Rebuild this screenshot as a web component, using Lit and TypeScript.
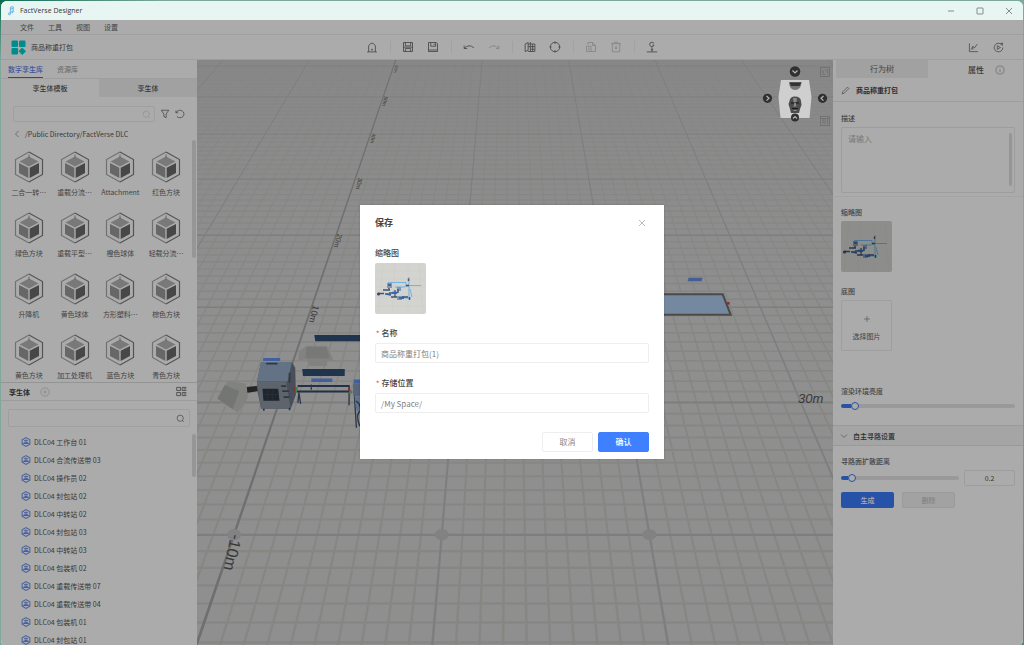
import { LitElement, html, css, svg } from "lit";
import { customElement, property } from "lit/decorators.js";

const ICONS: Record<string, unknown> = {
  home: svg`<path d="M3.500 14.500V6.500L6 3.500Q8 2 10 3.500L12.500 6.500V14.500M1.500 14.500H14.500M8 10.500V12.500M7 11.500H9"/>`,
  saveAs: svg`<path d="M2 2H14V14H2ZM4.500 2V6.500H11.500V2M4.500 14V10H11.500V14M2 8.200H14"/>`,
  save: svg`<path d="M2 2H12.500L14 3.500V14H2ZM5 2V7H11.500V2M9.500 3.500V5.500M2 12H14"/>`,
  undo: svg`<path d="M1.500 6V10H5.500M1.800 9.600Q8 3.500 14.500 9"/>`,
  redo: svg`<path d="M14.500 6V10H10.500M14.200 9.600Q8 3.500 1.500 9"/>`,
  map: svg`<path d="M1.500 4L5.500 2V12.500L1.500 14ZM5.500 4H14.500V14H5.500M8.500 1.500V14.500M11.500 4V14M5.500 7.500H14.500M8.500 11H14.500"/>`,
  target: svg`<circle cx="8" cy="8" r="6.300"/><path d="M8 .8V4M8 12V15.200M.8 8H3.500M12.500 8H15.200"/>`,
  copy: svg`<path d="M4 5V2H10L14 6V14H8M10 2V6H14M2 7H8V14H2ZM4 9.500H6M4 11.500H6"/>`,
  trash: svg`<path d="M1.500 3.500H14.500M5.500 3.500V1.500H10.500V3.500M3 3.500V14.500H13V3.500M6.500 7L9.500 11M9.500 7L6.500 11"/>`,
  origin: svg`<path d="M10.800 3Q8 .3 5.500 2.500Q3.700 5.500 6.500 7.500Q9.500 8.500 10.800 5.500H8.500M8 8.500V14.500M1 14.500H15M6.500 11.500H9.500"/>`,
  chart: svg`<path d="M2 2V14H14.500M4.500 11L7 6.500L9.500 8.500L13.500 3M7 6.500V11"/>`,
  play: svg`<path d="M13.500 5A6.300 6.300 0 1 0 14.300 8M10.500 2.500L14 1.500L13.500 5M6.300 5.300L10.800 8L6.300 10.700Z"/>`,
  filter: svg`<path d="M2 2H14L9.800 8V14L6.200 12V8Z"/>`,
  refresh: svg`<path d="M1.500 2.500V6H5M2 5.500A6.500 6 0 1 1 3 12"/>`,
  search: svg`<circle cx="7.500" cy="7.500" r="5.500"/><path d="M11.500 11.500L14 14"/>`,
  back: svg`<path d="M11 2L5 8L11 14"/>`,
  down: svg`<path d="M2 5L8 11L14 5"/>`,
  pen: svg`<path d="M2 14L3 10.500L11.500 2L14 4.500L5.500 13Z"/>`,
  info: svg`<circle cx="8" cy="8" r="6.500"/><path d="M8 7V11.500M8 4.500V5.500"/>`,
  add: svg`<circle cx="8" cy="8" r="6.500"/><path d="M8 5V11M5 8H11"/>`,
  plus: svg`<path d="M8 2V14M2 8H14"/>`,
  close: svg`<path d="M2 2L14 14M14 2L2 14"/>`,
  min: svg`<path d="M2 8H14"/>`,
  max: svg`<rect x="2" y="2" width="12" height="12" rx="1"/>`,
  layout: svg`<path d="M1 2H6.500V6.500H1ZM1 9.500H6.500V14H1ZM9 2V6.500H15M9 2H15M9 9.500V14H15M9 9.500H15M11 4.200H15M11 11.700H15"/>`,
  note: svg`<path d="M7 2V12M7 2L11.500 1V9M7 5L11.500 4"/><circle cx="5.500" cy="12.500" r="1.600"/><circle cx="10.200" cy="9.500" r="1.300"/>`,
  cube: svg`<path d="M8 1L14.200 4.500V11.500L8 15L1.800 11.500V4.500Z"/><path d="M5 6.500L8 5L11 6.500M4.500 10.500H11.500L8 8Z"/>`,
};

const icon = (name: string, size = 12) =>
  html`<svg class="icon" width=${size} height=${size} viewBox="0 0 16 16" aria-hidden="true">${ICONS[name]}</svg>`;

const preview = () => html`<svg class="preview" viewBox="0 0 51 51" role="img" aria-label="缩略图">
  <rect width="51" height="51" fill="#d3d3d0"/>
  <path d="M0 8H51M0 16H51M0 24H51M0 33H51M0 43H51M8 0L3 51M20 0L17 51M33 0V51M44 0L48 51" stroke="#cbcbc8" stroke-width=".5"/>
  <path d="M13 19.500H31V23M34 14V36M20 24H29L34 22.500H46M35 26L37 34M22 35H36" stroke="#6aaee0" stroke-width=".9" fill="none"/>
  <path d="M3 30.500H9M8 27H15M14 30H22M16 34H33M20 27V34M11 31L16 32" stroke="#42536f" stroke-width="1.300" fill="none"/>
  <path d="M12 20H17V25H12ZM22 24H26V28H22ZM22 33H27V37H22Z" fill="#7b98bd"/>
  <path d="M13 22H16M14 25V27M23 26V30M24 35H29M34.500 34V37M33.500 15.500V18M31 22.500H34" stroke="#46536c" stroke-width="1.400"/>
  <path d="M17 29.500H23M10 31H14M28 33V36" stroke="#2f69bd" stroke-width="1.500"/>
  <circle cx="3.500" cy="31" r="1.500" fill="#3d4657"/>
</svg>`;

const shared = css`
  * { box-sizing: border-box; }
  .icon { display: block; fill: none; stroke: currentColor; stroke-width: 1.1; flex: none; }
  button, input, textarea { font: inherit; color: inherit; margin: 0; outline: none; }
  button { border: 0; padding: 0; background: none; }
  .preview { display: block; width: 51px; height: 51px; border-radius: 2px; }
`;

/* Floor grid: rows recede toward the horizon, columns meet at one vanishing point. */
const VX = 511, VY = -277, NEAR = 533;
const rowY = (n: number) => VY + 41650 / (51.4 + n);
const column = (k: number) => {
  const x = 442 + k * 20.7;
  const at = (y: number) => VX + ((x - VX) * (y - VY)) / (NEAR - VY);
  const major = k % 10 === 0;
  const w = k === -10 ? 2.6 : 2.2;
  const half = (y: number) => (w / 2) * ((y - VY) / (NEAR - VY));
  const fill = k === -10 ? "#a6a6a6" : major ? "#babcbe" : "#c8c8c4";
  return svg`<polygon fill=${fill} points="${at(40) - half(40)},40 ${at(40) + half(40)},40 ${at(660) + half(660)},660 ${at(660) - half(660)},660"/>`;
};
const row = (n: number) => {
  const y = rowY(n);
  const major = n % 10 === 0;
  return svg`<line x1="0" x2="1024" y1=${y} y2=${y} stroke=${major ? "#bcbcbc" : "#c8c8c4"} stroke-width=${2.2 * ((y - VY) / (NEAR - VY))}/>`;
};
const range = (a: number, b: number) => Array.from({ length: b - a + 1 }, (_, i) => a + i);

@customElement("scene-view")
export class SceneView extends LitElement {
  static styles = [shared, css`
    :host { display: block; position: relative; overflow: hidden; min-width: 0; background: #d5d5d5; }
    .floor { position: absolute; inset: 0; width: 100%; height: 100%; display: block; }
    .gizmo { position: absolute; top: 4px; right: 0; z-index: 6; display: block; }
    .mark { font-family: "Liberation Sans", Arial, sans-serif; fill: #555; }
  `];
  render() {
    return html`
      <svg class="floor" viewBox="197 60 636 584" preserveAspectRatio="xMidYMid slice">
        <defs><linearGradient id="far" x2="0" y2="1"><stop offset="0" stop-color="#c6c6c6" stop-opacity=".75"/><stop offset="1" stop-color="#cdcdcd" stop-opacity="0"/></linearGradient></defs>
        ${range(-45, 52).filter((k) => k % 10).map(column)}
        ${range(-7, 75).filter((n) => n % 10).map(row)}
        <rect x="197" y="55" width="636" height="260" fill="url(#far)"/>
        ${range(0, 7).map((n) => row(n * 10))}
        ${[-40, -30, -20, -10, 0, 10, 20, 30, 40, 50].map(column)}
        ${[235, 442, 649].map((x) => svg`<ellipse cx=${x} cy="533" rx="7" ry="5.500" fill="#c2c2c2"/>`)}
        <text class="mark" font-size="16" transform="translate(232 532) rotate(102)">-10m</text>
        <text class="mark" font-size="13" x="797" y="402" font-style="italic">30m</text>
        <text class="mark" font-size="9" transform="translate(314 304) rotate(105)">10m</text>
        <text class="mark" font-size="7" transform="translate(338 233) rotate(105)">20m</text>
        <text class="mark" font-size="6" transform="translate(359 177) rotate(104)">30m</text>
        <text class="mark" font-size="5" transform="translate(373 133) rotate(104)">40m</text>
        <text class="mark" font-size="5" transform="translate(385 96) rotate(104)">50m</text>
        <text class="mark" font-size="4" transform="translate(396 65) rotate(104)">60m</text>
        <g transform="translate(197 250) scale(.3333)">
          <path d="M354 252H500V271H357ZM318 354H445V375H320Z" fill="#304f73"/>
          <path d="M308 300L332 284H392L412 330L395 328L390 345H340L330 325L306 330Z" fill="#c2c3c0"/>
          <path d="M330 288H390L400 322H328Z" fill="#b3b5b1"/>
          <path d="M95 390L150 397L155 440L125 485L66 443Z" fill="#c2c4c1"/>
          <path d="M86 402L130 420L110 474L64 442Z" fill="#aeb1ad"/>
          <path d="M201 321H252V330H201ZM345 382H408V393H345ZM472 385H500V397H472Z" fill="#6290eb"/>
          <path d="M152 408L186 404V420L154 425Z" fill="#35363a"/>
          <path d="M195 333H287L297 350L299 430L284 473H195L182 410L184 385Z" fill="#6d7786"/>
          <path d="M195 333H287L274 391H182Z" fill="#95abc8"/>
          <path d="M182 392H270L283 473H195Z" fill="#8d96a2"/>
          <path d="M199 413H246L250 449H202Z" fill="#303640"/>
          <path d="M210 338H244M280 365V395M255 405H270M258 420H278M262 438H280M203 473V479M280 470V477" stroke="#4a5361" stroke-width="5" fill="none"/>
          <path d="M215 413V449M230 413V449M202 430H248" stroke="#454e5c" stroke-width="2"/>
          <path d="M304 402H460V408H304ZM301 418H464V424H301Z" fill="#354969"/>
          <path d="M308 424L305 455M308 424L313 458M458 424V462M345 400V416M474 435L480 530" stroke="#43536c" stroke-width="4"/>
          <path d="M292 407H298V419H292ZM455 407H461V419H455Z" fill="#d03951"/>
          <path d="M298 408H305V420H298ZM458 420H468V427H458Z" fill="#5fc95f"/>
          <path d="M470 397H500V435H470Z" fill="#8299bb"/><path d="M474 435H500V495L480 478Z" fill="#8cacd8"/>
          <path d="M478 450Q492 455 492 478Q476 490 490 525" fill="none" stroke="#3b4f69" stroke-width="4"/>
        </g>
        <path d="M640 293.500H722L730 314H640Z" fill="#aecbed" stroke="#736d6b" stroke-width="2"/>
        <path d="M688 277H702L701 280.500H687Z" fill="#688cdc"/>
        <path d="M726 302.500H729" stroke="#cc4659" stroke-width="2.500"/>
      </svg>
      <svg class="gizmo" width="71" height="64" viewBox="762 64 71 64" aria-hidden="true">
        <path d="M781 80H809L811.500 97L809.500 118H780.500L778.500 97Z" fill="#cfcfcf"/>
        <g fill="#303030"><circle cx="795" cy="71.500" r="5.300"/><circle cx="767.500" cy="98.300" r="4.600"/><circle cx="822.500" cy="98.300" r="4.600"/></g>
        <path d="M792.500 70.500L795 73L797.500 70.500M766.500 96L769 98.300L766.500 100.600M823.500 96L821 98.300L823.500 100.600" fill="none" stroke="#b5b5b5" stroke-width="1.200"/>
        <path d="M789 82H801.500Q801 90 795 90Q789.500 90 789 82Z" fill="#777"/><path d="M789.500 82.500H801.500L799.500 86H791Z" fill="#333"/>
        <path d="M789.500 101Q790 96.500 795 96.500Q800.500 96.500 801 101L801.500 105L800 109L799 113H791L790 109L788.500 104Z" fill="#4c4c4c"/>
        <path d="M793 98H797L796.500 102H793.500ZM794.200 103H795.800L796.500 106.500H793.500ZM793.500 110H796.500V111H793.500Z" fill="#8a8a8a"/>
        <path d="M791 103H794M796 103H799M792 108.500H798" stroke="#171717" stroke-width="1.200"/>
        <circle cx="795" cy="117.500" r="4" fill="#303030"/><path d="M793 118.500L795 116.500L797 118.500" fill="none" stroke="#bbb" stroke-width="1.100"/>
        <g fill="none" stroke="#707070" stroke-width=".9"><rect x="820.500" y="67.500" width="9" height="9"/><path d="M823 70V74.500H825M825 70H827.500V74.500"/><rect x="820.500" y="116.500" width="9" height="9"/><path d="M823 119V124M825 119V124M827.500 119V124M820.500 118.500H829.500"/></g>
      </svg>`;
  }
}

@customElement("twin-tile")
export class TwinTile extends LitElement {
  @property() label = "";
  static styles = [shared, css`
    :host { display: block; min-width: 0; }
    .tile { width: 100%; display: flex; flex-direction: column; align-items: center; gap: 2px; }
    .label { line-height: 12px; white-space: nowrap; color: #666; }
  `];
  render() {
    return html`<button class="tile">
      <svg width="30" height="34" viewBox="0 0 30 34" aria-hidden="true">
        <path d="M15 2L1.500 9.500V24.500L15 32" fill="none" stroke="#a9a9a9" stroke-width="1.200"/>
        <path d="M15 2L28.500 9.500V24.500L15 32" fill="none" stroke="#7c7c7c" stroke-width="1.200"/>
        <path d="M15 6.500L24.500 11.500L15 16.500L5.500 11.500Z" fill="#b5b5b5"/>
        <path d="M5 13L14.300 17.800V28L5 23Z" fill="#9a9a9a"/>
        <path d="M25 13L15.700 17.800V28L25 23Z" fill="#6a6a6a"/>
        <path d="M15 4.500V8" stroke="#999" stroke-width="1"/>
      </svg>
      <span class="label">${this.label}</span>
    </button>`;
  }
}

const TILES = ["二合一转⋯", "重载分流⋯", "Attachment", "红色方块", "绿色方块", "重载平型⋯", "橙色球体", "轻载分流⋯",
  "升降机", "黄色球体", "方形塑料⋯", "棕色方块", "黄色方块", "加工处理机", "蓝色方块", "青色方块"];
const TWINS = ["工作台 01", "合流传送带 03", "操作员 02", "封包站 02", "中转站 02", "封包站 03", "中转站 03",
  "包装机 02", "重载传送带 07", "重载传送带 04", "包装机 01", "封包站 01"];
const TOOLS = [["home"], ["saveAs", "save"], ["undo", "redo"], ["map", "target"], ["copy", "trash"], ["origin"]];
const INACTIVE = ["redo", "copy", "trash"];

@customElement("app-root")
export class AppRoot extends LitElement {
  static styles = [shared, css`
    :host { display: block; height: 100vh; padding: 1px; background: linear-gradient(160deg, #0b6b50, #7da89b 6%, #7da89b 70%, #4f8a68);
      font: 7px/12px "Noto Sans CJK SC", "Noto Sans", sans-serif; color: #555; }
    .window { height: 100%; display: flex; flex-direction: column; border-radius: 6px; overflow: hidden; background: #fff; }
    .titlebar { height: 19px; flex: none; display: flex; align-items: center; gap: 4px; padding: 0 2px 0 5px; background: #e8f6f3; color: #333;
      font-family: "Open Sans", "Noto Sans", sans-serif; }
    .titlebar .logo { color: #3598e0; display: flex; }
    .spacer { flex: 1; }
    .wincontrol { width: 25px; display: flex; justify-content: center; color: #333; }
    .wincontrols { display: flex; gap: 4px; }
    .content { flex: 1; min-height: 0; position: relative; display: flex; flex-direction: column; }
    .menubar { height: 15px; flex: none; display: flex; align-items: center; gap: 14px; padding: 0 19px; border-bottom: 1px solid #eee; color: #666; }
    .toolbar { height: 25px; flex: none; display: grid; grid-template-columns: 1fr auto 1fr; align-items: center; border-bottom: 1px solid #ececec; }
    .project { display: flex; align-items: center; gap: 5px; padding-left: 10px; color: #555; }
    .tools { display: flex; align-items: center; }
    .tool { width: 25px; display: flex; justify-content: center; color: #666; }
    .faded { color: #c4c4c4; }
    .group { display: flex; }
    .group + .group { margin-left: 5px; padding-left: 5px; border-left: 1px solid #f0f0f0; }
    .run { justify-self: end; display: flex; padding-right: 12px; }
    .main { flex: 1; min-height: 0; display: grid; grid-template-columns: 196px minmax(0, 1fr) 190px; }
    .side { min-width: 0; min-height: 0; display: flex; flex-direction: column; overflow: hidden; background: #fff; }
    .library { height: 323px; flex: none; display: flex; flex-direction: column; position: relative; border-bottom: 1px solid #ddd; overflow: hidden; }
    .tabs { height: 19px; flex: none; display: flex; gap: 14px; padding: 0 7px; border-bottom: 1px solid #ececec; }
    .tab { height: 18px; color: #999; }
    .tab.on { color: #5a80e6; font-weight: 500; border-bottom: 1px solid #3e70e6; }
    .halves { height: 18px; flex: none; display: grid; grid-template-columns: 1fr 1fr; }
    .half.off { background: #f1f1f1; }
    .half { font-weight: 500; }
    .find { display: flex; align-items: center; gap: 5px; padding: 9px 12px 0; }
    .searchbox { flex: 1; min-width: 0; height: 16px; display: flex; align-items: center; border: 1px solid #ededed; border-radius: 2px; padding: 0 3px; }
    .searchbox input { flex: 1; min-width: 0; border: 0; padding: 0; background: none; height: 12px; }
    .tint { color: #d2d2d2; display: flex; }
    .path { display: flex; align-items: center; gap: 4px; padding: 5px 12px 0; line-height: 14px; }
    .tiles { display: grid; grid-template-columns: repeat(4, 1fr); row-gap: 13px; padding: 9px 8px 0 5px; }
    .bar { position: absolute; width: 4px; border-radius: 2px; background: #e0e0e0; }
    .bar-tiles { right: 1px; top: 80px; height: 118px; }
    .bar-twins { right: 1px; top: 7px; height: 43px; }
    .bar-text { width: 3px; right: 3px; top: 6px; height: 53px; }
    .subhead { height: 18px; flex: none; display: flex; align-items: center; gap: 10px; padding: 0 10px 0 8px; border-bottom: 1px solid #e9e9e9; }
    .subhead h2, .name h2, .section h2 { margin: 0; font-size: 7px; font-weight: 700; color: #444; }
    .filter { padding: 8px 7px 0; display: flex; }
    .filter .searchbox { height: 18px; padding: 0 4px; }
    .listwrap { position: relative; flex: 1; min-height: 0; overflow: hidden; }
    .list { list-style: none; margin: 0; padding: 6px 0 0 20px; }
    .list li { height: 18px; display: flex; align-items: center; gap: 3px; color: #555; }
    .list .icon { color: #6a90ee; stroke-width: 1.7; }
    .props-tabs { height: 19px; flex: none; display: flex; padding-left: 3px; font-size: 8px; }
    .props-tabs .behavior { flex: 0 0 92px; background: #f1f1f1; height: 18px; color: #666; }
    .props-tabs .current { flex: 1; display: flex; align-items: center; justify-content: flex-end; gap: 11px; padding-right: 18px; font-weight: 500; }
    .current .icon { color: #999; }
    .name { height: 23px; flex: none; display: flex; align-items: center; gap: 6px; padding: 0 8px; border-bottom: 1px solid #eaeaea; }
    .block { padding: 0 8px; display: flex; flex-direction: column; align-items: flex-start; }
    .block label, .block .caption { line-height: 12px; font-weight: 500; color: #666; }
    .describe { padding-top: 10px; gap: 3px; height: 95px; border-bottom: 1px solid #f5f5f5; }
    .area { position: relative; width: 100%; }
    .area textarea { display: block; width: 100%; height: 66px; resize: none; overflow: hidden; border: 1px solid #ebebeb; border-radius: 2px; padding: 4px 6px; font-size: 8px; line-height: 14px; background: none; }
    textarea::placeholder { color: #b4b4b4; }
    .thumbs { padding-top: 9px; gap: 3px; }
    .backdrop { padding-top: 13px; gap: 3px; }
    .pick { width: 51px; height: 51px; border: 1px solid #ececec; border-radius: 2px; display: flex; flex-direction: column; align-items: center; justify-content: center; gap: 7px; padding-top: 5px; color: #666; }
    .light { padding-top: 34px; padding-bottom: 14px; gap: 4px; }
    .range { -webkit-appearance: none; appearance: none; width: 100%; min-width: 0; height: 10px; padding: 0; background: none; display: block; }
    .range::-webkit-slider-runnable-track { height: 4px; border-radius: 2px; background: linear-gradient(to right, #3a7bfa var(--fill), #e4e4e4 var(--fill)); }
    .range::-webkit-slider-thumb { -webkit-appearance: none; width: 8px; height: 8px; margin-top: -2px; border: 1px solid #3a7bfa; border-radius: 50%; background: #fff; }
    .section { height: 21px; flex: none; display: flex; align-items: center; gap: 5px; padding: 0 7px; background: #f6f6f6; border: solid #e6e6e6; border-width: 1px 0; }
    .section h2 { font-weight: 500; }
    .route { padding-top: 9px; gap: 3px; }
    .pair { width: 100%; display: grid; grid-template-columns: 1fr 51px; gap: 5px; align-items: center; }
    .number { width: 100%; height: 16px; border: 1px solid #eaeaea; border-radius: 2px; text-align: center; padding: 0; background: none; }
    .actions { display: flex; gap: 8px; padding-top: 3px; }
    .small { width: 53px; height: 16px; border-radius: 2px; background: #3a7bfa; color: #fff; font-weight: 500; }
    .small[disabled] { background: #f2f2f2; border: 1px solid #e8e8e8; color: #c4c4c4; }
    .overlay { position: absolute; inset: 0; z-index: 5; background: rgba(0, 0, 0, .33); }
    .center { position: absolute; inset: 0; z-index: 7; display: flex; align-items: center; justify-content: center; padding-bottom: 2px; }
    .dialog { width: 304px; background: #fff; padding: 11px 15px 7px; border: 0; display: flex; flex-direction: column; color: #444; font-size: 8px; line-height: 14px; box-shadow: 0 0 2px rgba(0, 0, 0, .2); }
    .head { display: flex; justify-content: space-between; align-items: center; padding-right: 3px; }
    .head h1 { margin: 0; font-size: 9px; line-height: 14px; font-weight: 700; }
    .head button { color: #888; }
    .thumb { display: flex; flex-direction: column; gap: 3px; padding-top: 16px; font-weight: 500; }
    .field { display: flex; flex-direction: column; gap: 3px; padding-top: 13px; }
    .thumb + .field { padding-top: 12px; }
    .field label { font-weight: 500; }
    .star { color: #f04848; padding-left: 1px; padding-right: 2px; font-size: 7px; }
    .field input { height: 20px; border: 1px solid #eee; border-radius: 2px; padding: 0 5px; color: #808080; background: #fff; }
    .buttons { display: flex; justify-content: flex-end; gap: 5px; padding-top: 19px; }
    .btn { width: 51px; height: 20px; border-radius: 2px; border: 1px solid #eee; color: #888; }
    .primary { background: #3e80ff; border-color: #3e80ff; color: #fff; font-weight: 500; }
  `];

  private slider(id: string, value: number) {
    return html`<input class="range" id=${id} type="range" min="0" max="100" .value=${String(value)} style="--fill: ${value}%">`;
  }

  private leftPanel() {
    return html`<aside class="side">
      <section class="library">
        <div class="tabs"><button class="tab on">数字孪生库</button><button class="tab">资源库</button></div>
        <div class="halves"><button class="half">孪生体模板</button><button class="half off">孪生体</button></div>
        <div class="find">
          <div class="searchbox"><input type="text" aria-label="搜索模板"><span class="tint">${icon("search", 9)}</span></div>
          <button aria-label="筛选">${icon("filter", 10)}</button>
          <button aria-label="刷新">${icon("refresh", 10)}</button>
        </div>
        <div class="path"><button aria-label="返回">${icon("back", 8)}</button><span>/Public Directory/FactVerse DLC</span></div>
        <div class="tiles">${TILES.map((t) => html`<twin-tile .label=${t}></twin-tile>`)}</div>
        <div class="bar bar-tiles"></div>
      </section>
      <div class="subhead"><h2>孪生体</h2><button class="faded" aria-label="添加">${icon("add", 10)}</button><span class="spacer"></span><button aria-label="布局">${icon("layout", 11)}</button></div>
      <div class="filter"><div class="searchbox"><input type="text" aria-label="搜索孪生体">${icon("search", 9)}</div></div>
      <div class="listwrap">
        <ul class="list">${TWINS.map((t) => html`<li>${icon("cube", 10)}<span>DLC04 ${t}</span></li>`)}</ul>
        <div class="bar bar-twins"></div>
      </div>
    </aside>`;
  }

  private rightPanel() {
    return html`<aside class="side">
      <div class="props-tabs"><button class="behavior">行为树</button><button class="current"><span>属性</span>${icon("info", 10)}</button></div>
      <div class="name">${icon("pen", 9)}<h2>商品称重打包</h2></div>
      <div class="block describe"><label for="desc">描述</label>
        <div class="area"><textarea id="desc" placeholder="请输入"></textarea><div class="bar bar-text"></div></div></div>
      <div class="block thumbs"><span class="caption">缩略图</span>${preview()}</div>
      <div class="block backdrop"><span class="caption">底图</span><button class="pick">${icon("plus", 8)}<span>选择图片</span></button></div>
      <div class="block light"><label for="light">渲染环境亮度</label>${this.slider("light", 6)}</div>
      <div class="section">${icon("down", 8)}<h2>自主寻路设置</h2></div>
      <div class="block route"><label for="spread">寻路面扩散距离</label>
        <div class="pair">${this.slider("spread", 6)}<input class="number" type="text" value="0.2" aria-label="距离"></div>
        <div class="actions"><button class="small">生成</button><button class="small" disabled>删除</button></div></div>
    </aside>`;
  }

  private dialog() {
    return html`<div class="center"><form class="dialog" role="dialog" aria-labelledby="dlg" @submit=${(e: Event) => e.preventDefault()}>
      <div class="head"><h1 id="dlg">保存</h1><button type="button" aria-label="关闭">${icon("close", 8)}</button></div>
      <div class="thumb"><span>缩略图</span>${preview()}</div>
      <div class="field"><label for="title"><span class="star">*</span>名称</label><input id="title" type="text" value="商品称重打包(1)"></div>
      <div class="field"><label for="place"><span class="star">*</span>存储位置</label><input id="place" type="text" value="/My Space/"></div>
      <div class="buttons"><button type="button" class="btn">取消</button><button class="btn primary">确认</button></div>
    </form></div>`;
  }

  render() {
    return html`<div class="window">
      <header class="titlebar"><span class="logo">${icon("note", 10)}</span><span>FactVerse Designer</span><span class="spacer"></span>
        <div class="wincontrols"><button class="wincontrol" aria-label="最小化">${icon("min", 8)}</button><button class="wincontrol" aria-label="最大化">${icon("max", 8)}</button><button class="wincontrol" aria-label="关闭窗口">${icon("close", 8)}</button></div>
      </header>
      <div class="content">
        <nav class="menubar">${["文件", "工具", "视图", "设置"].map((m) => html`<button>${m}</button>`)}</nav>
        <div class="toolbar">
          <div class="project"><svg width="15" height="15" viewBox="0 0 15 15" fill="#00d1d1" aria-hidden="true"><rect x=".500" y=".500" width="6.500" height="6.500" rx="1.200"/><rect x="8" y=".500" width="6.500" height="6.500" rx="1.200"/><rect x=".500" y="8" width="6.500" height="6.500" rx="1.200"/><path d="M11.200 8L14.500 11.200L11.200 14.500L8 11.200Z" stroke="#00d1d1" stroke-linejoin="round"/></svg><span>商品称重打包</span></div>
          <div class="tools">${TOOLS.map((g) => html`<div class="group">${g.map((t) => html`<button class="tool ${INACTIVE.includes(t) ? "faded" : ""}" aria-label=${t}>${icon(t, 12)}</button>`)}</div>`)}</div>
          <div class="run"><button class="tool" aria-label="chart">${icon("chart", 11)}</button><button class="tool" aria-label="play">${icon("play", 11)}</button></div>
        </div>
        <div class="main">${this.leftPanel()}<scene-view></scene-view>${this.rightPanel()}</div>
        <div class="overlay"></div>
        ${this.dialog()}
      </div>
    </div>`;
  }
}
